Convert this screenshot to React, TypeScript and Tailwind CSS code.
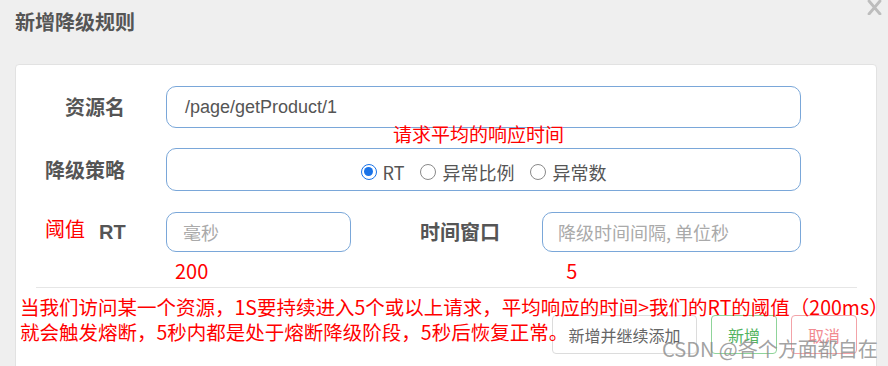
import React from "react";

function Radio({ checked, label }: { checked?: boolean; label: string }) {
  return (
    <label className="flex items-center gap-[6px]">
      <span
        className={
          checked
            ? "shrink-0 w-[16px] h-[16px] min-w-[16px] rounded-full border-[1.5px] border-[#1a73e8] flex items-center justify-center"
            : "shrink-0 w-[16px] h-[16px] min-w-[16px] rounded-full border-[1.5px] border-[#8a8a8a]"
        }
      >
        {checked ? <span className="w-[9px] h-[9px] rounded-full bg-[#1a73e8]" /> : null}
      </span>
      <span className="text-[18px] leading-[20px] text-[#555] whitespace-nowrap">{label}</span>
    </label>
  );
}

export default function App() {
  return (
    <div className="relative w-[888px] h-[366px] overflow-hidden bg-[#efefef] font-['Liberation_Sans','Noto_Sans_CJK_SC',sans-serif]">
      {/* header */}
      <div className="h-[64px] pl-[15px] pt-[8px]">
        <h1 className="text-[20px] leading-[28px] font-bold text-[#555] font-['Noto_Sans_CJK_SC',sans-serif]">
          新增降级规则
        </h1>
      </div>
      <svg className="absolute left-[867px] top-[0px]" width="15" height="15" viewBox="0 0 15 15">
        <path d="M2 1 L13 14 M13 1 L2 14" stroke="#bdbdbd" strokeWidth="2.8" strokeLinecap="round" />
      </svg>

      {/* panel */}
      <div className="ml-[15px] w-[862px] h-[320px] bg-white border border-[#e2e2e2] rounded-[4px] pt-[21px]">
        {/* row 1 */}
        <div className="flex items-center h-[42px]">
          <div className="shrink-0 w-[109px] text-right text-[20px] font-bold text-[#555] font-['Noto_Sans_CJK_SC',sans-serif]">
            资源名
          </div>
          <div className="shrink-0 ml-[41px] w-[635px] h-[42px] rounded-[10px] border border-[#7aa7d9] flex items-center pl-[18px] text-[18px] text-[#555]">
            /page/getProduct/1
          </div>
        </div>

        {/* row 2 */}
        <div className="flex items-center h-[43px] mt-[20px]">
          <div className="shrink-0 w-[109px] text-right text-[20px] font-bold text-[#555] font-['Noto_Sans_CJK_SC',sans-serif]">
            降级策略
          </div>
          <div className="shrink-0 ml-[41px] w-[635px] h-[43px] rounded-[10px] border border-[#7aa7d9] flex items-center justify-center gap-[16px] pt-[4px] font-['Noto_Sans_CJK_SC',sans-serif]">
            <Radio checked label="RT" />
            <Radio label="异常比例" />
            <Radio label="异常数" />
          </div>
        </div>

        {/* row 3 */}
        <div className="flex items-center h-[40px] mt-[21px]">
          <div className="shrink-0 w-[109px] flex items-center whitespace-nowrap font-['Noto_Sans_CJK_SC',sans-serif]">
            <span className="ml-[29px] text-[20px] leading-[24px] text-[#ff0000] -mt-[6px]">阈值</span>
            <span className="ml-[14px] text-[20px] font-bold text-[#555] font-['Liberation_Sans',sans-serif]">RT</span>
          </div>
          <div className="shrink-0 ml-[41px] w-[185px] h-[40px] rounded-[10px] border border-[#7aa7d9] flex items-center pl-[16px] text-[18px] text-[#aaa] font-['Noto_Sans_CJK_SC',sans-serif]">
            毫秒
          </div>
          <div className="shrink-0 ml-[69px] w-[80px] whitespace-nowrap text-[20px] font-bold text-[#555] font-['Noto_Sans_CJK_SC',sans-serif]">
            时间窗口
          </div>
          <div className="shrink-0 ml-[42px] w-[259px] h-[40px] rounded-[10px] border border-[#7aa7d9] flex items-center pl-[15px] text-[18px] text-[#aaa] whitespace-nowrap font-['Noto_Sans_CJK_SC',sans-serif]">
            降级时间间隔, 单位秒
          </div>
        </div>

        {/* annotation numbers */}
        <div className="flex h-[20px] mt-[9px] text-[20px] leading-[20px] text-[#ff0000] font-['Noto_Sans_CJK_SC',sans-serif]">
          <span className="ml-[159px]">200</span>
          <span className="ml-[358px]">5</span>
        </div>

        {/* divider */}
        <div className="ml-[20px] w-[821px] mt-[6px] border-t border-[#e6e6e6]" />

        {/* footer */}
        <div className="flex justify-end items-center pr-[19px] mt-[27px] gap-[14px] font-['Noto_Sans_CJK_SC',sans-serif]">
          <button className="w-[145px] h-[39px] rounded-[4px] border border-[#dcdcdc] bg-white text-[16px] text-[#666]">
            新增并继续添加
          </button>
          <button className="w-[66px] h-[39px] rounded-[4px] border border-[#8fd49a] bg-white text-[16px] text-[#52b35f]">
            新增
          </button>
          <button className="w-[66px] h-[39px] rounded-[4px] border border-[#f3a3a8] bg-white text-[16px] text-[#f28a90]">
            取消
          </button>
        </div>
      </div>

      {/* overlay annotations */}
      <div className="absolute left-[393px] top-[122px] text-[19px] leading-[24px] text-[#ff0000] font-['Noto_Sans_CJK_SC',sans-serif] whitespace-nowrap">
        请求平均的响应时间
      </div>
      <div className="absolute left-[20px] top-[294px] text-[19.5px] leading-[25px] text-[#ff0000] font-['Noto_Sans_CJK_SC',sans-serif] whitespace-nowrap">
        <div>当我们访问某一个资源，1S要持续进入5个或以上请求，平均响应的时间&gt;我们的RT的阈值（200ms）</div>
        <div>就会触发熔断，5秒内都是处于熔断降级阶段，5秒后恢复正常。</div>
      </div>
      <div className="absolute left-[662px] top-[336px] text-[20px] leading-[26px] text-[#8a8a8a]/80 font-['Noto_Sans_CJK_SC',sans-serif] whitespace-nowrap">
        CSDN @各个方面都自在
      </div>
    </div>
  );
}
